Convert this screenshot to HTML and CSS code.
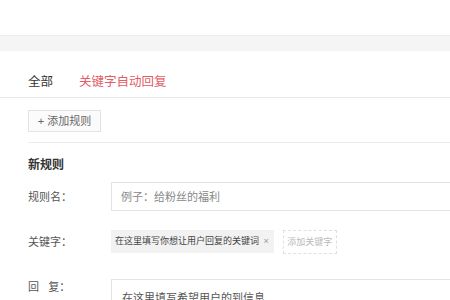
FILE: index.html
```html
<!DOCTYPE html>
<html>
	<head>
		<meta charset="UTF-8">
		<title>关键字自动回复</title>
		<link rel="stylesheet" href="styles.css">
	</head>
	<body>
		<div class="topbar"></div>
		<div class="band"></div>
		<div class="tabs">
			<span class="tab">全部</span>
			<span class="tab active">关键字自动回复</span>
		</div>
		<div class="main">
			<div class="toolbar">
				<span class="btn">+ 添加规则</span>
			</div>
			<div class="rule">
				<h3>新规则</h3>
				<div class="row">
					<label>规则名：</label>
					<div class="input">例子：给粉丝的福利</div>
				</div>
				<div class="row row-key">
					<label>关键字：</label>
					<div class="keys">
						<span class="tag">在这里填写你想让用户回复的关键词 <i>×</i></span>
						<span class="addkey">添加关键字</span>
					</div>
				</div>
				<div class="row row-reply">
					<label>回&nbsp;&nbsp;&nbsp;复：</label>
					<div class="reply">在这里填写希望用户的到信息</div>
				</div>
			</div>
		</div>
	</body>
</html>
```

FILE: styles.css
```css
body{
	margin:0;
	font-family:"Liberation Sans","Noto Sans CJK SC",sans-serif;
	color:#555;
	background:#fff;
	overflow:hidden;
}
.topbar{
	height:35px;
}
.band{
	height:15px;
	background-color:#f5f5f5;
	border-top:1px solid #ececec;
}
.tabs{
	height:47px;
	box-sizing:border-box;
	padding:0 0 7px 28px;
	display:flex;
	align-items:flex-end;
	border-bottom:1px solid #e8e8e8;
}
.tab{
	font-size:12.5px;
	line-height:16px;
	color:#333;
	margin-right:26px;
}
.tab.active{
	color:#e35c66;
}
.main{
	padding-left:28px;
}
.toolbar{
	padding:12px 0 10px;
	border-bottom:1px solid #ebebeb;
}
.btn{
	display:inline-block;
	width:73px;
	height:22px;
	box-sizing:border-box;
	border:1px solid #e3e3e3;
	background-color:#fbfbfb;
	font-size:11px;
	line-height:20px;
	color:#666;
	text-align:center;
}
.rule h3{
	margin:15px 0 0;
	font-size:12px;
	line-height:14px;
	color:#333;
	font-weight:bold;
}
.row{
	display:flex;
	align-items:flex-start;
}
.row label{
	width:83px;
	flex:none;
	font-size:11px;
	line-height:14px;
	color:#555;
}
.row:first-of-type{
	margin-top:10px;
}
.row label{
	padding-top:8px;
}
.input{
	flex:1;
	height:29px;
	box-sizing:border-box;
	border:1px solid #e3e3e3;
	border-right:none;
	padding-left:9px;
	font-size:11px;
	line-height:28px;
	color:#888;
}
.row-key{
	margin-top:19px;
}
.row-key label{
	padding-top:5px;
}
.keys{
	display:flex;
	align-items:flex-start;
}
.tag{
	height:23px;
	box-sizing:border-box;
	padding:0 5px 0 4px;
	background-color:#f2f2f2;
	font-size:9px;
	line-height:23px;
	color:#444;
	white-space:nowrap;
}
.tag i{
	font-style:normal;
	color:#999;
	margin-left:2px;
}
.addkey{
	margin-left:9px;
	width:54px;
	height:24px;
	box-sizing:border-box;
	border:1px dashed #e0e0e0;
	font-size:9px;
	line-height:22px;
	color:#bbb;
	text-align:center;
}
.row-reply{
	margin-top:25px;
}
.row-reply label{
	padding-top:1px;
}
.reply{
	flex:1;
	height:60px;
	box-sizing:border-box;
	border:1px solid #e3e3e3;
	border-right:none;
	padding:11px 0 0 10px;
	font-size:11px;
	line-height:14px;
	color:#555;
}
```
